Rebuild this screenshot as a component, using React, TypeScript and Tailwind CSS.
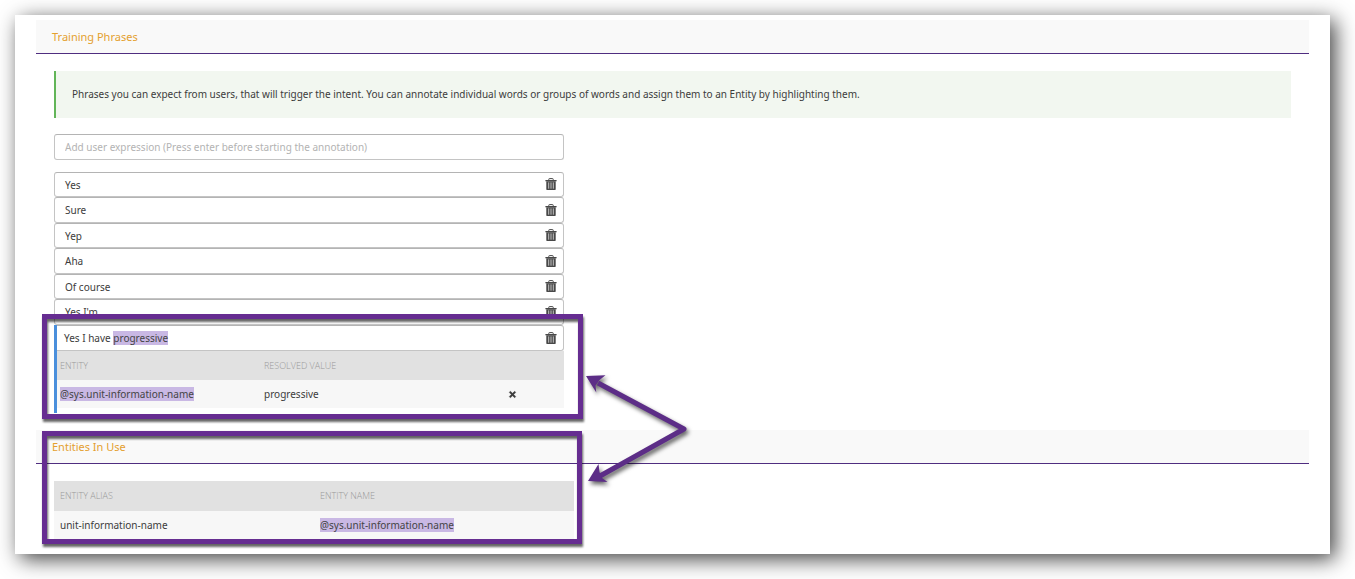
import React from "react";
import { FaTimes } from "react-icons/fa";

const phrases = ["Yes", "Sure", "Yep", "Aha", "Of course", "Yes I'm"];

function TrashIcon() {
  return (
    <svg viewBox="0 0 12 13" className="h-[13px] w-3" aria-hidden="true">
      <path d="M3.8 2.2V1.3Q3.8 .6 4.4 .6H7.6Q8.2 .6 8.2 1.3V2.2" fill="none" stroke="#484848" strokeWidth="1" />
      <path d="M.4 2H11.6V3.3H.4Z" fill="#484848" />
      <path d="M1.3 3.3H10.7V10.9Q10.7 12.1 9.6 12.1H2.4Q1.3 12.1 1.3 10.9Z" fill="#484848" />
      <path d="M3.7 4.4V10.7M6 4.4V10.7M8.3 4.4V10.7" stroke="#c4c4c4" strokeWidth="1" />
    </svg>
  );
}

function Phrase({ label, children, className }: { label: string; children: React.ReactNode; className: string }) {
  return (
    <div className={`flex items-center justify-between rounded-[3px] border border-[#c4c4c4] border-t-[#b4b4b4] bg-white pr-[6px] ${className}`}>
      <span>{children}</span>
      <button type="button" aria-label={`Delete ${label}`}>
        <TrashIcon />
      </button>
    </div>
  );
}

function Mark({ children }: { children: React.ReactNode }) {
  return <mark className="inline-block h-[14px] bg-[#c9b8e4] leading-[14px] text-[#444]">{children}</mark>;
}

function SectionTitle({ children }: { children: React.ReactNode }) {
  return (
    <h2 className="border-b border-[#4f2d80] bg-[#f9f9f9] px-4 pt-[9px] pb-2 text-[11px] leading-4 text-[#e4a02f]">
      {children}
    </h2>
  );
}

function Frame({ className }: { className: string }) {
  return (
    <div
      aria-hidden="true"
      className={`pointer-events-none absolute border-[5px] border-[#662d91] drop-shadow-[1px_3px_1px_rgba(0,0,0,0.6)] ${className}`}
    />
  );
}

function Arrows() {
  return (
    <svg
      viewBox="0 0 110 120"
      aria-hidden="true"
      className="pointer-events-none absolute top-[355px] left-[565px] h-[120px] w-[110px] overflow-visible drop-shadow-[2px_3px_2px_rgba(0,0,0,0.6)]"
    >
      <path d="M18 13L104 59L20 106" fill="none" stroke="#5c2d87" strokeWidth="5" strokeLinejoin="round" />
      <path d="M6 6L25.5 5.3L19.5 10L15.5 15.5L16.3 22.5Z" fill="#5c2d87" />
      <path d="M8 111L18.5 94L19.5 102L22 108L27.5 112Z" fill="#5c2d87" />
    </svg>
  );
}

export default function App() {
  return (
    <div className="bg-white pt-[15px] pr-[25px] pb-[25px] pl-[15px] font-['Noto_Sans','Open_Sans',sans-serif] text-[10px] leading-4 text-[#3c3c3c]">
      <main className="relative bg-white px-[21px] pt-[5px] pb-[15px] shadow-[5px_5px_20px_rgba(0,0,0,0.75)]">
        <section>
          <SectionTitle>Training Phrases</SectionTitle>
          <div className="px-[18px] pt-[17px] pb-[17px]">
            <p className="border-l-2 border-[#62b558] bg-[#f2f7f0] px-4 pt-[15px] pb-4">
              Phrases you can expect from users, that will trigger the intent. You can annotate individual words or
              groups of words and assign them to an Entity by highlighting them.
            </p>
            <div className="mt-4 max-w-[510px]">
              <input
                type="text"
                aria-label="Add user expression"
                placeholder="Add user expression (Press enter before starting the annotation)"
                className="mb-3 block h-[26px] w-full rounded-[3px] border border-[#c4c4c4] border-t-[#b4b4b4] bg-white px-[10px] outline-none placeholder:text-[#b3b3b3]"
              />
              <ul>
                {phrases.map((phrase) => (
                  <li key={phrase} className="flex flex-col odd:h-[25px] even:h-[26px]">
                    <Phrase label={phrase} className="grow pl-[10px]">
                      {phrase}
                    </Phrase>
                  </li>
                ))}
              </ul>
              <div className="relative">
                <div className="border-l-[3px] border-[#4a8fdc] pb-[5px]">
                  <Phrase label="Yes I have progressive" className="h-[26px] rounded-l-none border-l-0 pl-[7px]">
                    Yes I have <Mark>progressive</Mark>
                  </Phrase>
                  <table className="w-full table-fixed text-left">
                    <thead>
                      <tr className="h-[29px] bg-[#e1e1e1] font-['Open_Sans',sans-serif] text-[9px] text-[#999]">
                        <th className="w-[204px] pl-[3px] font-light">ENTITY</th>
                        <th className="pl-[3px] font-light">RESOLVED VALUE</th>
                        <th className="w-[103px]" aria-label="Actions" />
                      </tr>
                    </thead>
                    <tbody>
                      <tr className="h-[28px] bg-[#f7f7f7]">
                        <td className="pl-[3px]">
                          <Mark>@sys.unit-information-name</Mark>
                        </td>
                        <td className="pl-[3px]">progressive</td>
                        <td className="text-center">
                          <button type="button" aria-label="Remove entity" className="block px-[47px]">
                            <FaTimes className="h-[9px] w-[9px]" stroke="#444" strokeWidth="30" />
                          </button>
                        </td>
                      </tr>
                    </tbody>
                  </table>
                </div>
                <Frame className="-top-[11px] -right-[19px] -bottom-[6px] -left-3" />
              </div>
            </div>
          </div>
        </section>

        <section>
          <SectionTitle>Entities In Use</SectionTitle>
          <div className="px-[18px] pt-[17px]">
            <div className="relative max-w-[520px]">
              <table className="w-full table-fixed text-left">
                <thead>
                  <tr className="h-[30px] bg-[#e1e1e1] font-['Open_Sans',sans-serif] text-[9px] text-[#999]">
                    <th className="pl-[6px] font-light">ENTITY ALIAS</th>
                    <th className="pl-[6px] font-light">ENTITY NAME</th>
                  </tr>
                </thead>
                <tbody>
                  <tr className="h-[28px] bg-[#f7f7f7]">
                    <td className="pl-[6px]">unit-information-name</td>
                    <td className="pl-[6px]">
                      <Mark>@sys.unit-information-name</Mark>
                    </td>
                  </tr>
                </tbody>
              </table>
              <Frame className="-top-[50px] -right-2 -bottom-[5px] -left-3" />
            </div>
          </div>
        </section>
        <Arrows />
      </main>
    </div>
  );
}
